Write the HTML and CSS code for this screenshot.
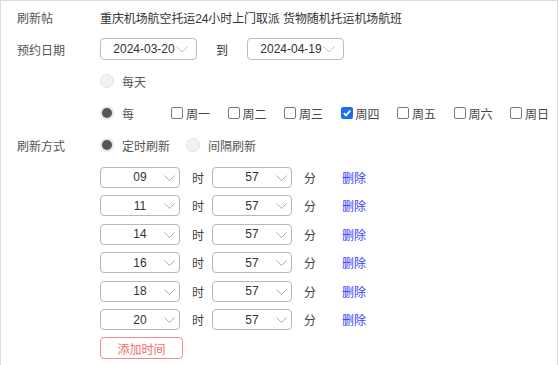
FILE: index.html
```html
<!DOCTYPE html>
<html lang="zh-CN">
<head>
    <meta charset="UTF-8">
    <title>刷新设置</title>
    <link rel="stylesheet" href="styles.css">
</head>
<body>
    <div class="panel">
        <div class="row">
            <div class="label">刷新帖</div>
            <div class="value">重庆机场航空托运24小时上门取派 货物随机托运机场航班</div>
        </div>

        <div class="row">
            <div class="label">预约日期</div>
            <div class="date-select">2024-03-20<svg class="chev" width="12" height="7" viewBox="0 0 12 7"><path d="M0.5 0.5 L6 6 L11.5 0.5" fill="none" stroke="#c4c4c4" stroke-width="1"/></svg></div>
            <span class="to">到</span>
            <div class="date-select">2024-04-19<svg class="chev" width="12" height="7" viewBox="0 0 12 7"><path d="M0.5 0.5 L6 6 L11.5 0.5" fill="none" stroke="#c4c4c4" stroke-width="1"/></svg></div>
        </div>

        <div class="row">
            <div class="label"></div>
            <label class="radio"><span class="dot"></span>每天</label>
        </div>

        <div class="row">
            <div class="label"></div>
            <label class="radio weekly"><span class="dot on"></span>每</label>
            <div class="days">
                <label class="day"><span class="box"></span>周一</label>
                <label class="day"><span class="box"></span>周二</label>
                <label class="day"><span class="box"></span>周三</label>
                <label class="day"><span class="box on"><svg width="12" height="12" viewBox="0 0 12 12"><path d="M2.8 6.2 L5 8.4 L9.3 3.6" fill="none" stroke="#fff" stroke-width="1.8"/></svg></span>周四</label>
                <label class="day"><span class="box"></span>周五</label>
                <label class="day"><span class="box"></span>周六</label>
                <label class="day"><span class="box"></span>周日</label>
            </div>
        </div>

        <div class="row">
            <div class="label">刷新方式</div>
            <label class="radio mode"><span class="dot on"></span>定时刷新</label>
            <label class="radio"><span class="dot"></span>间隔刷新</label>
        </div>

        <div class="times">
            <div class="time-row">
                <div class="sel">09<svg class="arrow" width="11" height="6" viewBox="0 0 11 6"><path d="M0.5 0.5 L5.5 5.5 L10.5 0.5" fill="none" stroke="#aaa"/></svg></div>
                <span class="unit">时</span>
                <div class="sel">57<svg class="arrow" width="11" height="6" viewBox="0 0 11 6"><path d="M0.5 0.5 L5.5 5.5 L10.5 0.5" fill="none" stroke="#aaa"/></svg></div>
                <span class="unit">分</span>
                <a class="del">删除</a>
            </div>
            <div class="time-row">
                <div class="sel">11<svg class="arrow" width="11" height="6" viewBox="0 0 11 6"><path d="M0.5 0.5 L5.5 5.5 L10.5 0.5" fill="none" stroke="#aaa"/></svg></div>
                <span class="unit">时</span>
                <div class="sel">57<svg class="arrow" width="11" height="6" viewBox="0 0 11 6"><path d="M0.5 0.5 L5.5 5.5 L10.5 0.5" fill="none" stroke="#aaa"/></svg></div>
                <span class="unit">分</span>
                <a class="del">删除</a>
            </div>
            <div class="time-row">
                <div class="sel">14<svg class="arrow" width="11" height="6" viewBox="0 0 11 6"><path d="M0.5 0.5 L5.5 5.5 L10.5 0.5" fill="none" stroke="#aaa"/></svg></div>
                <span class="unit">时</span>
                <div class="sel">57<svg class="arrow" width="11" height="6" viewBox="0 0 11 6"><path d="M0.5 0.5 L5.5 5.5 L10.5 0.5" fill="none" stroke="#aaa"/></svg></div>
                <span class="unit">分</span>
                <a class="del">删除</a>
            </div>
            <div class="time-row">
                <div class="sel">16<svg class="arrow" width="11" height="6" viewBox="0 0 11 6"><path d="M0.5 0.5 L5.5 5.5 L10.5 0.5" fill="none" stroke="#aaa"/></svg></div>
                <span class="unit">时</span>
                <div class="sel">57<svg class="arrow" width="11" height="6" viewBox="0 0 11 6"><path d="M0.5 0.5 L5.5 5.5 L10.5 0.5" fill="none" stroke="#aaa"/></svg></div>
                <span class="unit">分</span>
                <a class="del">删除</a>
            </div>
            <div class="time-row">
                <div class="sel">18<svg class="arrow" width="11" height="6" viewBox="0 0 11 6"><path d="M0.5 0.5 L5.5 5.5 L10.5 0.5" fill="none" stroke="#aaa"/></svg></div>
                <span class="unit">时</span>
                <div class="sel">57<svg class="arrow" width="11" height="6" viewBox="0 0 11 6"><path d="M0.5 0.5 L5.5 5.5 L10.5 0.5" fill="none" stroke="#aaa"/></svg></div>
                <span class="unit">分</span>
                <a class="del">删除</a>
            </div>
            <div class="time-row">
                <div class="sel">20<svg class="arrow" width="11" height="6" viewBox="0 0 11 6"><path d="M0.5 0.5 L5.5 5.5 L10.5 0.5" fill="none" stroke="#aaa"/></svg></div>
                <span class="unit">时</span>
                <div class="sel">57<svg class="arrow" width="11" height="6" viewBox="0 0 11 6"><path d="M0.5 0.5 L5.5 5.5 L10.5 0.5" fill="none" stroke="#aaa"/></svg></div>
                <span class="unit">分</span>
                <a class="del">删除</a>
            </div>
            <div class="time-row">
                <button class="add-btn">添加时间</button>
            </div>
        </div>
    </div>
</body>
</html>
```

FILE: styles.css
```css
body {
    margin: 0;
    font-family: "Liberation Sans", "Noto Sans CJK SC", sans-serif;
    font-size: 12px;
    color: #333;
    background: #fff;
}

.panel {
    width: 558px;
    height: 365px;
    box-sizing: border-box;
    border: 1px solid #dcdcdc;
    border-bottom: none;
    padding-left: 16px;
}

.row {
    display: flex;
    align-items: center;
    height: 32px;
}

.label {
    width: 83px;
    flex-shrink: 0;
    color: #555;
}

.value {
    color: #333;
    letter-spacing: -0.1px;
}

.date-select {
    width: 97px;
    height: 22px;
    box-sizing: border-box;
    border: 1px solid #bdbdbd;
    border-radius: 4px;
    display: flex;
    align-items: center;
    justify-content: center;
    padding-left: 4px;
    color: #333;
}

.date-select .chev {
    margin-left: 1px;
}

.to {
    margin: 0 19px;
}

.radio {
    display: flex;
    align-items: center;
    gap: 8px;
    color: #555;
}

.dot {
    width: 14px;
    height: 14px;
    box-sizing: border-box;
    border-radius: 50%;
    background: #f2f2f2;
    border: 1px solid #e2e2e2;
}

.dot.on {
    background: #555;
    border: 2px solid #e6e6e6;
}

.weekly {
    width: 71px;
}

.mode {
    margin-right: 16px;
}

.days {
    display: flex;
    gap: 17.5px;
}

.day {
    display: flex;
    align-items: center;
    gap: 3px;
    color: #444;
}

.box {
    width: 12px;
    height: 12px;
    box-sizing: border-box;
    border: 1px solid #777;
    border-radius: 2px;
    display: flex;
}

.box.on {
    border: none;
    background: #1a6ff0;
}

.times {
    padding-left: 83px;
    padding-top: 2px;
}

.time-row {
    display: flex;
    align-items: center;
    height: 28.5px;
}

.sel {
    position: relative;
    width: 80px;
    height: 21px;
    box-sizing: border-box;
    border: 1px solid #b8b8b8;
    border-radius: 4px;
    display: flex;
    align-items: center;
    justify-content: center;
    color: #333;
}

.sel .arrow {
    position: absolute;
    right: 4px;
    top: 7px;
}

.unit {
    margin: 0 8px 0 12px;
    color: #444;
}

.del {
    margin-left: 18px;
    color: #3a3aff;
    cursor: pointer;
}

.add-btn {
    width: 83px;
    height: 22px;
    border: 1px solid #f58a8a;
    border-radius: 4px;
    background: #fff;
    color: #f06a6a;
    font-family: inherit;
    font-size: 12px;
    padding: 0;
}
```
